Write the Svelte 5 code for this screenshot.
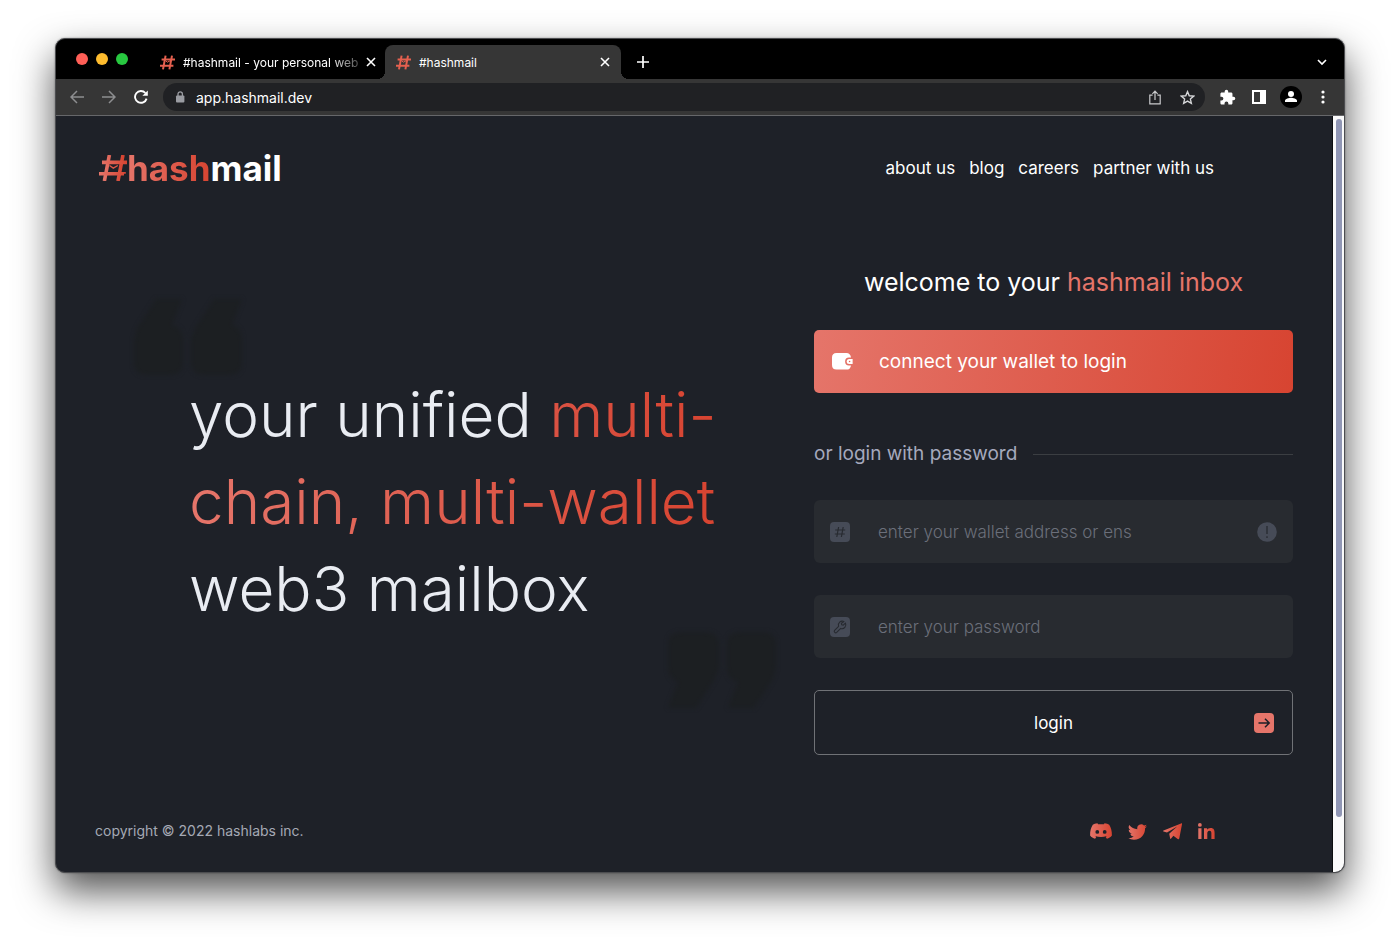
<script>
  const links = ['about us', 'blog', 'careers', 'partner with us'];
  const tabs = [
    { title: '#hashmail - your personal web', active: false },
    { title: '#hashmail', active: true }
  ];
  let wallet = $state('');
  let password = $state('');
</script>

{#snippet hash()}
  <svg class="favicon" width="15" height="15" viewBox="0 0 15 15" fill="none" stroke="#e5604f" stroke-width="2" aria-hidden="true">
    <path d="M5.6 .6 3 14.4M12 .6 9.4 14.4M1.6 4.4H15M0 10.8h13.4" />
    <path d="m5.4 5.6 2 1.6 3-1.6" stroke-width="1" />
  </svg>
{/snippet}

{#snippet quote()}
  <svg width="118" height="84" viewBox="0 0 118 84" fill="#1c1f22" aria-hidden="true">
    <path d="M26 4h26L42 30c8 2 11 8 11 16v20c0 11-5 14-15 14H18C8 80 4 76 4 66V48c0-6 2-11 4-16Z" />
    <path d="M84 4h28L102 30c7 2 10 8 10 16v20c0 11-5 14-15 14H76c-10 0-15-4-15-14V48c0-6 3-11 5-16Z" />
  </svg>
{/snippet}

<div class="desktop">
  <div class="window">
    <div class="tabbar">
      <div class="lights"><i class="red"></i><i class="yellow"></i><i class="green"></i></div>
      {#each tabs as tab}
        <div class="tab" class:active={tab.active}>
          {@render hash()}
          <span class="title" class:fade={!tab.active}>{tab.title}</span>
          <button class="plain" aria-label="Close tab">
            <svg width="10" height="10" viewBox="0 0 10 10" stroke="#fff" stroke-width="1.6"><path d="m1 1 8 8M9 1 1 9" /></svg>
          </button>
        </div>
      {/each}
      <button class="plain plus" aria-label="New tab">
        <svg width="12" height="12" viewBox="0 0 12 12" stroke="#fff" stroke-width="1.7"><path d="M6 0v12M0 6h12" /></svg>
      </button>
      <button class="plain chevron" aria-label="Search tabs">
        <svg width="10" height="7" viewBox="0 0 10 7" fill="none" stroke="#fff" stroke-width="1.6"><path d="m1 1 4 4 4-4" /></svg>
      </button>
    </div>

    <div class="toolbar">
      <button class="plain tool" aria-label="Back">
        <svg width="14" height="14" viewBox="0 0 14 14" fill="none" stroke="#8d8e90" stroke-width="1.5"><path d="M14 7H1M7 1 1 7l6 6" /></svg>
      </button>
      <button class="plain tool" aria-label="Forward">
        <svg width="14" height="14" viewBox="0 0 14 14" fill="none" stroke="#8d8e90" stroke-width="1.5"><path d="M0 7h13M7 1l6 6-6 6" /></svg>
      </button>
      <button class="plain tool" aria-label="Reload">
        <svg width="14" height="14" viewBox="0 0 14 14" fill="none" stroke="#fff" stroke-width="1.9"><path d="M12.6 8.6A5.9 5.9 0 1 1 11.4 3" /><path d="M13.8.4v5.4H8.4Z" fill="#fff" stroke="none" /></svg>
      </button>
      <div class="omnibox">
        <svg width="10" height="12" viewBox="0 0 10 12" aria-hidden="true"><rect x="1" y="4.4" width="8.4" height="7.2" rx="1" fill="#9a9ca2" /><path d="M3 5V3a2.2 2.2 0 0 1 4.4 0v2" fill="none" stroke="#9a9ca2" stroke-width="1.3" /></svg>
        <span>app.hashmail.dev</span>
        <button class="plain tool share" aria-label="Share">
          <svg width="12" height="15" viewBox="0 0 12 15" fill="none" stroke="#c9cacc" stroke-width="1.2"><path d="M3.6 5.2H.8v8.6h10.4V5.2H8.4M6 10V1.2M3.4 3.8 6 1.2l2.6 2.6" /></svg>
        </button>
        <button class="plain tool" aria-label="Bookmark">
          <svg width="15" height="15" viewBox="0 0 24 24" fill="none" stroke="#d5d6d8" stroke-width="2.2"><path d="m12 2.6 2.8 6.6 7.2.6-5.4 4.7 1.6 7L12 17.8l-6.2 3.7 1.6-7L2 9.8l7.2-.6Z" /></svg>
        </button>
      </div>
      <button class="plain tool" aria-label="Extensions">
        <svg width="17" height="17" viewBox="0 0 24 24" fill="#fff"><path d="M20.5 11H19V7c0-1.100-.9-2-2-2h-4V3.500a2.500 2.500 0 0 0-5 0V5H4c-1.100 0-2 .9-2 2v3.800h1.500a2.700 2.700 0 0 1 0 5.400H2V20c0 1.100.9 2 2 2h3.800v-1.500a2.700 2.700 0 0 1 5.400 0V22H17c1.100 0 2-.9 2-2v-4h1.500a2.500 2.500 0 0 0 0-5Z" /></svg>
      </button>
      <button class="plain tool" aria-label="Side panel">
        <svg width="14" height="14" viewBox="0 0 14 14"><path d="M0 0h14v14H0ZM2 2v10h6V2Z" fill="#fff" fill-rule="evenodd" /></svg>
      </button>
      <button class="plain tool" aria-label="Profile">
        <svg width="22" height="22" viewBox="0 0 22 22"><circle cx="11" cy="11" r="11" fill="#000" /><circle cx="11" cy="8" r="3" fill="#fff" /><path d="M5 16v-1.200c0-2 4-3 6-3s6 1 6 3V16Z" fill="#fff" /></svg>
      </button>
      <button class="plain tool" aria-label="Menu">
        <svg width="4" height="14" viewBox="0 0 4 14" fill="#fff"><circle cx="2" cy="2" r="1.600" /><circle cx="2" cy="7" r="1.600" /><circle cx="2" cy="12" r="1.600" /></svg>
      </button>
    </div>

    <div class="view">
      <div class="page">
        <header>
          <a class="logo" href="#home">
            <svg width="28" height="26" viewBox="0 0 28 26" fill="none" stroke="url(#ember)" stroke-width="3.6" aria-hidden="true">
              <path d="M10.400 0 5.400 26M24 0l-5 26" />
              <path d="M3 7.400h25v.01M0 18.800h25v.01" />
              <path d="m10.500 10.500 3.800 2.600 4.500-2.600" stroke="#dd5848" stroke-width="1.400" />
            </svg>
            <span class="hash">hash</span><span>mail</span>
          </a>
          <nav>
            {#each links as link}<a href="#{link.replaceAll(' ', '-')}">{link}</a>{/each}
          </nav>
        </header>

        <main>
          <section class="hero">
            <div class="open">{@render quote()}</div>
            <h1>your unified <span class="warm late">multi-</span><br /><span class="warm">chain, multi-wallet</span><br />web3 mailbox</h1>
            <div class="close">{@render quote()}</div>
          </section>

          <form onsubmit={(e) => e.preventDefault()}>
            <h2>welcome to your <em>hashmail inbox</em></h2>
            <button class="connect" type="button">
              <svg width="21" height="17" viewBox="0 0 21 17" aria-hidden="true">
                <path d="M4.500 0h10C17 0 18.600 1.600 19 4.600h-2a3.900 3.900 0 0 0 0 7.800h2c-.4 2.800-2 4.200-4.500 4.200h-10C1.500 16.600 0 15 0 12V4.500C0 1.600 1.500 0 4.500 0Z" fill="#fff" />
                <path d="M17.200 6h3.400v5h-3.400a2.500 2.500 0 0 1 0-5Z" fill="#fff" />
                <circle cx="17.600" cy="8.500" r=".8" fill="#df6859" />
              </svg>
              <span>connect your wallet to login</span>
            </button>
            <div class="divider"><span>or login with password</span></div>
            <label class="field">
              <svg width="20" height="20" viewBox="0 0 20 20" aria-hidden="true"><rect width="20" height="20" rx="4" fill="#464b57" /><path d="M8.600 5 6.800 15M13.200 5l-1.800 10M5.200 8h10M4.800 12h10" stroke="#272a30" stroke-width="1.200" /></svg>
              <input type="text" placeholder="enter your wallet address or ens" aria-label="enter your wallet address or ens" bind:value={wallet} />
              <svg width="20" height="20" viewBox="0 0 20 20" aria-hidden="true"><circle cx="10" cy="10" r="9.800" fill="#464b57" /><path d="M10 4v8M10 14.200v1.800" stroke="#272a30" stroke-width="1.300" /></svg>
            </label>
            <label class="field">
              <svg width="20" height="20" viewBox="0 0 20 20" aria-hidden="true"><rect width="20" height="20" rx="4" fill="#464b57" /><path d="M13.900 4.600A3.800 3.800 0 0 0 8.600 9.300l-4 4c-1.200 1.300.8 3.300 2.100 2.100l4-4a3.800 3.800 0 0 0 4.700-5.300l-2.100 2.100-1.600-.4-.3-1.500Z" fill="none" stroke="#272a30" stroke-width="1.100" stroke-linejoin="round" /></svg>
              <input type="password" placeholder="enter your password" aria-label="enter your password" bind:value={password} />
            </label>
            <button class="login" type="submit">
              <span>login</span>
              <svg width="20" height="20" viewBox="0 0 20 20" aria-hidden="true"><rect width="20" height="20" rx="4" fill="#e5756a" /><path d="M4.500 10h10.500M11 5.800l4.200 4.200-4.200 4.200" fill="none" stroke="#1c1f26" stroke-width="1.500" /></svg>
            </button>
          </form>
        </main>

        <footer>
          <span>copyright © 2022 hashlabs inc.</span>
          <div class="social">
            <a href="#discord" aria-label="Discord">
              <svg width="22" height="16" viewBox="0 0 22 16"><path d="M7.500.2 8 1.200h6l.5-1c2 .2 3.500.8 4.700 1.600C21 4.600 22 8 21.900 12.500c-1.300 1.700-3 2.800-5 3.300l-1.200-1.900 1.200-.8c-3.800 1.200-8 1.200-11.800 0l1.200.8-1.200 1.900c-2-.5-3.700-1.600-5-3.300C0 8 1 4.600 2.800 1.800 4 1 5.500.4 7.500.2ZM7.300 7a1.900 1.900 0 1 0 0 3.800A1.900 1.900 0 0 0 7.300 7Zm7.400 0a1.900 1.900 0 1 0 0 3.800 1.900 1.900 0 0 0 0-3.800Z" fill="url(#ember)" fill-rule="evenodd" /></svg>
            </a>
            <a href="#twitter" aria-label="Twitter">
              <svg width="19" height="17" viewBox="0 1 16 14"><path d="M5.026 15c6.038 0 9.341-5.003 9.341-9.334 0-.14 0-.282-.006-.422A6.685 6.685 0 0 0 16 3.542a6.658 6.658 0 0 1-1.889.518 3.301 3.301 0 0 0 1.447-1.817 6.533 6.533 0 0 1-2.087.793A3.286 3.286 0 0 0 7.875 6.030a9.325 9.325 0 0 1-6.767-3.429 3.289 3.289 0 0 0 1.018 4.382A3.323 3.323 0 0 1 .64 6.575v.045a3.288 3.288 0 0 0 2.632 3.218 3.203 3.203 0 0 1-.865.115 3.230 3.230 0 0 1-.614-.057 3.283 3.283 0 0 0 3.067 2.277A6.588 6.588 0 0 1 .78 13.580a6.320 6.320 0 0 1-.78-.045A9.344 9.344 0 0 0 5.026 15z" fill="url(#ember)" /></svg>
            </a>
            <a href="#telegram" aria-label="Telegram">
              <svg width="19" height="17" viewBox="0 0 19 17"><path fill-rule="evenodd" d="M.6 7.600 18 .4c.8-.3 1.200 0 1 .8l-2.700 14c-.2 1-.8 1.200-1.600.7l-4.300-3.200-2.300 2.900c-.5.5-.9.4-1-.3L6.200 10.800l8-7.200-10.200 6L.6 8.600c-.8-.3-.8-.7 0-1Z" fill="url(#ember)" /></svg>
            </a>
            <a href="#linkedin" aria-label="LinkedIn">
              <svg width="17" height="16" viewBox="0 0 17 16" fill="url(#ember)"><path d="M.3 5.300h3.200V16H.3ZM1.900 0a1.900 1.900 0 1 1 0 3.800 1.900 1.900 0 0 1 0-3.800ZM6 5.300h3.100v1.500C9.800 5.700 11 5 12.600 5 16 5 16.600 7.200 16.600 10v6h-3.200v-5.300c0-1.400-.1-2.900-1.900-2.900s-2.200 1.400-2.200 2.800V16H6Z" /></svg>
            </a>
          </div>
        </footer>
      </div>
      <div class="scroll"><div class="thumb"></div></div>
    </div>
  </div>
  <svg class="defs" width="0" height="0" aria-hidden="true">
    <linearGradient id="ember"><stop offset="0" stop-color="#e5756a" /><stop offset="1" stop-color="#d74431" /></linearGradient>
  </svg>
</div>

<style>
  :global(body) { margin: 0; background: #fff; }
  * { box-sizing: border-box; }
  svg { display: block; flex: none; }
  a { color: inherit; text-decoration: none; }
  button, input { font: inherit; color: inherit; }
  .plain { display: grid; place-items: center; padding: 0; border: 0; background: none; }
  .defs { position: absolute; }

  .desktop {
    display: flex;
    min-height: 100vh;
    padding: 38px 55px 73px;
    font-family: Inter, "Open Sans", sans-serif;
    color: #fff;
  }
  .window {
    flex: 1;
    display: flex;
    flex-direction: column;
    min-width: 0;
    overflow: hidden;
    border: 1px solid #4c4d50;
    border-radius: 10px;
    background: #1e2128;
    box-shadow: 0 18px 38px rgba(0, 0, 0, .68), 0 0 2px rgba(0, 0, 0, .4);
  }

  .tabbar { display: flex; align-items: flex-end; height: 40px; padding-left: 20px; background: #000; }
  .lights { display: flex; gap: 8px; margin: 0 21px 14px 0; }
  .lights i { width: 12px; height: 12px; border-radius: 50%; }
  .red { background: #ff5f57; }
  .yellow { background: #febc2e; }
  .green { background: #28c840; }
  .tab {
    position: relative;
    flex: 0 1 236px;
    display: flex;
    align-items: center;
    gap: 8px;
    min-width: 0;
    height: 34px;
    padding: 0 11px;
    font-size: 12px;
  }
  .tab.active { border-radius: 8px 8px 0 0; background: #363636; }
  .tab.active::before, .tab.active::after {
    content: "";
    position: absolute;
    bottom: 0;
    width: 8px;
    height: 8px;
  }
  .tab.active::before { left: -8px; background: radial-gradient(circle at 0 0, transparent 8px, #363636 8px); }
  .tab.active::after { right: -8px; background: radial-gradient(circle at 100% 0, transparent 8px, #363636 8px); }
  .title { flex: 1; white-space: nowrap; }
  .fade { mask-image: linear-gradient(90deg, #000 calc(100% - 28px), rgba(0, 0, 0, .3)); }
  .plus { width: 44px; height: 34px; }
  .chevron { width: 44px; height: 34px; margin-left: auto; }

  .toolbar {
    display: flex;
    align-items: center;
    height: 37px;
    padding: 0 5px;
    border-bottom: 1px solid #66676a;
    background: #363636;
  }
  .tool { width: 32px; height: 28px; }
  .omnibox {
    flex: 1;
    display: flex;
    align-items: center;
    gap: 11px;
    height: 28px;
    margin: 0 6px;
    padding: 0 2px 0 12px;
    border-radius: 14px;
    background: #202124;
    font-size: 14px;
  }
  .omnibox .tool { margin-left: -11px; }
  .omnibox .share { margin-left: auto; }

  .view { flex: 1; display: flex; }
  .page { flex: 1; display: flex; flex-direction: column; padding: 0 39px; border-right: 1px solid #0d0e10; }
  .scroll { width: 11px; padding: 3px 2px 3px 3px; background: #fafafa; }
  .thumb { height: 93%; border-radius: 3px; background: #9096b4; }

  header { display: flex; align-items: center; justify-content: space-between; height: 103px; padding: 0 79px 0 4px; }
  .logo { display: flex; align-items: center; font-size: 35px; font-weight: 700; line-height: 44px; }
  .hash { background: linear-gradient(90deg, #e5756a, #d74431); background-clip: text; color: transparent; }
  nav { display: flex; gap: 14px; font-size: 17px; line-height: 24px; }

  main { display: grid; grid-template-columns: 1fr 479px; margin-top: 45px; }
  .hero { position: relative; padding: 107px 0 0 94px; }
  h1 { margin: 0; font-size: 62px; font-weight: 300; line-height: 87px; color: #e9ecf2; white-space: nowrap; }
  .warm { background: linear-gradient(90deg, #e5756a, #d74431); background-clip: text; color: transparent; }
  .late { background-image: linear-gradient(90deg, #da5243, #d74431); }
  .open, .close { position: absolute; filter: blur(2px); }
  .open { top: 31px; left: 35px; }
  .close { top: 364px; right: 34px; transform: rotate(180deg); }

  form { display: flex; flex-direction: column; }
  h2 { margin: 0 0 30px; font-size: 25px; font-weight: 400; line-height: 36px; text-align: center; }
  em { font-style: normal; color: #e5756a; }
  .connect {
    display: flex;
    align-items: center;
    gap: 26px;
    height: 63px;
    padding: 0 18px;
    border: 0;
    border-radius: 5px;
    background: linear-gradient(100deg, #e5756a, #d74431);
    font-size: 19px;
  }
  .divider { display: flex; align-items: center; gap: 16px; margin: 47px 0 32px; font-size: 19px; line-height: 28px; color: #a5a9bd; }
  .divider::after { content: ""; flex: 1; height: 1px; background: #3b3e42; }
  .field {
    display: flex;
    align-items: center;
    gap: 28px;
    height: 63px;
    margin-bottom: 32px;
    padding: 0 16px;
    border-radius: 6px;
    background: #282b30;
  }
  .field input { flex: 1; min-width: 0; padding: 0; border: 0; outline: 0; background: none; font-size: 17px; font-weight: 300; }
  .field input::placeholder { color: #6b6f7a; opacity: 1; }
  .login {
    display: grid;
    grid-template-columns: 1fr auto 1fr;
    align-items: center;
    height: 65px;
    padding: 0 18px;
    border: 1px solid #707276;
    border-radius: 5px;
    background: none;
    font-size: 17px;
  }
  .login span { grid-column: 2; }
  .login svg { justify-self: end; }

  footer {
    display: flex;
    align-items: center;
    justify-content: space-between;
    margin-top: auto;
    padding: 0 78px 29px 0;
    font-size: 14px;
    line-height: 24px;
    color: #a5a9b5;
  }
  .social { display: flex; align-items: center; gap: 16px; }
</style>
